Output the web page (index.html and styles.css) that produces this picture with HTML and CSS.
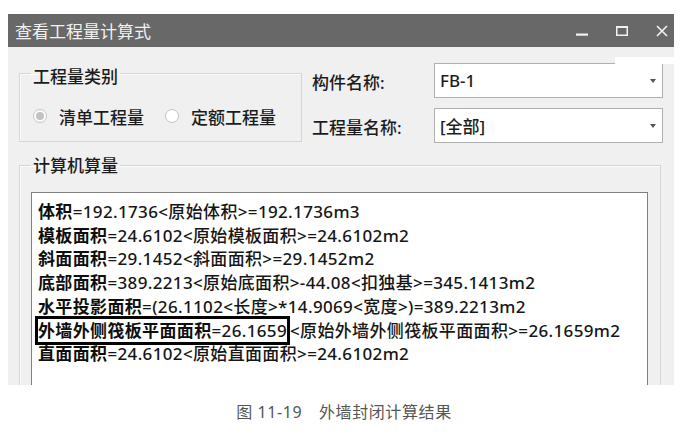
FILE: index.html
```html
<!DOCTYPE html>
<html lang="zh-CN">
<head>
    <meta charset="UTF-8">
    <meta name="viewport" content="width=device-width, initial-scale=1.0">
    <title>查看工程量计算式</title>
    <link rel="stylesheet" href="styles.css">
</head>
<body>
    <div class="window">
        <div class="titlebar">
            <span class="title">查看工程量计算式</span>
            <div class="controls">
                <span class="btn">
                    <svg width="12" height="12" viewBox="0 0 12 12"><rect x="0" y="8.5" width="12" height="2.2" fill="#f2f2f2"/></svg>
                </span>
                <span class="btn">
                    <svg width="12" height="10" viewBox="0 0 12 10"><rect x="0.75" y="1" width="10.5" height="8.25" fill="none" stroke="#f2f2f2" stroke-width="1.5"/><rect x="0" y="0" width="12" height="2" fill="#f2f2f2"/></svg>
                </span>
                <span class="btn">
                    <svg width="12" height="12" viewBox="0 0 12 12"><path d="M1 1 L11 11 M11 1 L1 11" stroke="#f2f2f2" stroke-width="1.6" fill="none"/></svg>
                </span>
            </div>
        </div>

        <div class="content">
            <div class="top">
                <fieldset class="group type">
                    <legend>工程量类别</legend>
                    <div class="radios">
                        <label class="radio"><span class="dot checked"></span>清单工程量</label>
                        <label class="radio second"><span class="dot"></span>定额工程量</label>
                    </div>
                </fieldset>

                <div class="fields">
                    <div class="field">
                        <span class="label">构件名称:</span>
                        <div class="combo"><span class="value">FB-1</span><span class="arrow"></span></div>
                    </div>
                    <div class="field">
                        <span class="label">工程量名称:</span>
                        <div class="combo"><span class="value">[全部]</span><span class="arrow"></span></div>
                    </div>
                </div>
            </div>

            <fieldset class="group calc">
                <legend>计算机算量</legend>
                <div class="box">
                    <div class="line"><b>体积</b>=192.1736&lt;原始体积&gt;=192.1736m3</div>
                    <div class="line"><b>模板面积</b>=24.6102&lt;原始模板面积&gt;=24.6102m2</div>
                    <div class="line"><b>斜面面积</b>=29.1452&lt;斜面面积&gt;=29.1452m2</div>
                    <div class="line"><b>底部面积</b>=389.2213&lt;原始底面积&gt;-44.08&lt;扣独基&gt;=345.1413m2</div>
                    <div class="line"><b>水平投影面积</b>=(26.1102&lt;长度&gt;*14.9069&lt;宽度&gt;)=389.2213m2</div>
                    <div class="line"><span class="mark"><b>外墙外侧筏板平面面积</b>=26.1659</span>&lt;原始外墙外侧筏板平面面积&gt;=26.1659m2</div>
                    <div class="line"><b>直面面积</b>=24.6102&lt;原始直面面积&gt;=24.6102m2</div>
                </div>
            </fieldset>
        </div>

        <div class="glare"></div>
    </div>

    <p class="caption">图 11-19&emsp;外墙封闭计算结果</p>
</body>
</html>
```

FILE: styles.css
```css
body {
    margin: 0;
    background-color: #fff;
    font-family: "Noto Sans", "Noto Sans CJK SC", sans-serif;
    color: #1c1c1c;
}

.window {
    position: relative;
    margin: 14px 0 0 8px;
    width: 666px;
    height: 371px;
    background-color: #f0f0f0;
    overflow: hidden;
    display: flex;
    flex-direction: column;
}

.titlebar {
    height: 33px;
    flex: none;
    background-color: #686868;
    color: #f2f2f2;
    display: flex;
    align-items: center;
    padding-left: 7px;
    font-size: 17px;
}

.title {
    flex: 1;
}

.controls {
    display: flex;
    gap: 16px;
    height: 100%;
}

.controls .btn {
    width: 24px;
    display: flex;
    align-items: center;
    justify-content: center;
}

.content {
    padding: 11px 0 0 11px;
    font-size: 17px;
    font-weight: 500;
}

.top {
    display: flex;
    align-items: flex-start;
}

.group {
    margin: 0;
    border: 1px solid #d6d6d6;
    box-shadow: inset 1px 1px 0 #fafafa;
    min-width: 0;
    box-sizing: border-box;
}

.group legend {
    line-height: 22px;
    padding: 8px 2px 0;
}

.type {
    width: 283px;
    padding: 0 12px 14px 11px;
}

.radios {
    display: flex;
    align-items: center;
    height: 22px;
    margin-top: 17px;
    margin-left: 2px;
}

.radio {
    display: flex;
    align-items: center;
    gap: 12px;
}

.radio.second {
    margin-left: 21px;
}

.dot {
    width: 12px;
    height: 12px;
    border: 1px solid #c4c4c4;
    border-radius: 50%;
    background-color: #fff;
    display: flex;
    align-items: center;
    justify-content: center;
}

.dot.checked::after {
    content: "";
    width: 8px;
    height: 8px;
    border-radius: 50%;
    background-color: #c2c2c2;
}

.fields {
    margin: 5px 0 0 10px;
    display: flex;
    flex-direction: column;
    gap: 10px;
}

.field {
    display: flex;
    align-items: center;
}

.label {
    width: 122px;
    padding-top: 2px;
}

.combo {
    width: 229px;
    height: 35px;
    box-sizing: border-box;
    border: 1px solid #b0b0b0;
    background-color: #fff;
    display: flex;
    align-items: center;
    padding: 0 6px 0 5px;
}

.combo .value {
    flex: 1;
}

.arrow {
    width: 0;
    height: 0;
    border-left: 3.5px solid transparent;
    border-right: 3.5px solid transparent;
    border-top: 4px solid #555;
}

.calc {
    margin-top: 10px;
    width: 642px;
    padding: 0 12px 0 11px;
}

.calc legend {
    padding: 2px 2px 0;
}

.box {
    margin-top: 15px;
    height: 240px;
    border: 1px solid #808080;
    background-color: #fff;
    padding: 7px 6px 0;
    line-height: 23.7px;
    letter-spacing: 0.35px;
    white-space: nowrap;
    color: #161616;
}

.box b {
    font-weight: 700;
    color: #0e0e0e;
}

.mark {
    border: 3px solid #000;
    margin-left: -3px;
}

.glare {
    position: absolute;
    left: 607px;
    top: 43px;
    width: 59px;
    height: 7px;
    background-color: #fff;
}

.caption {
    margin: 16px 0 0;
    text-align: center;
    font-size: 16px;
    line-height: 22px;
    letter-spacing: 0.6px;
    color: #555;
}
```
